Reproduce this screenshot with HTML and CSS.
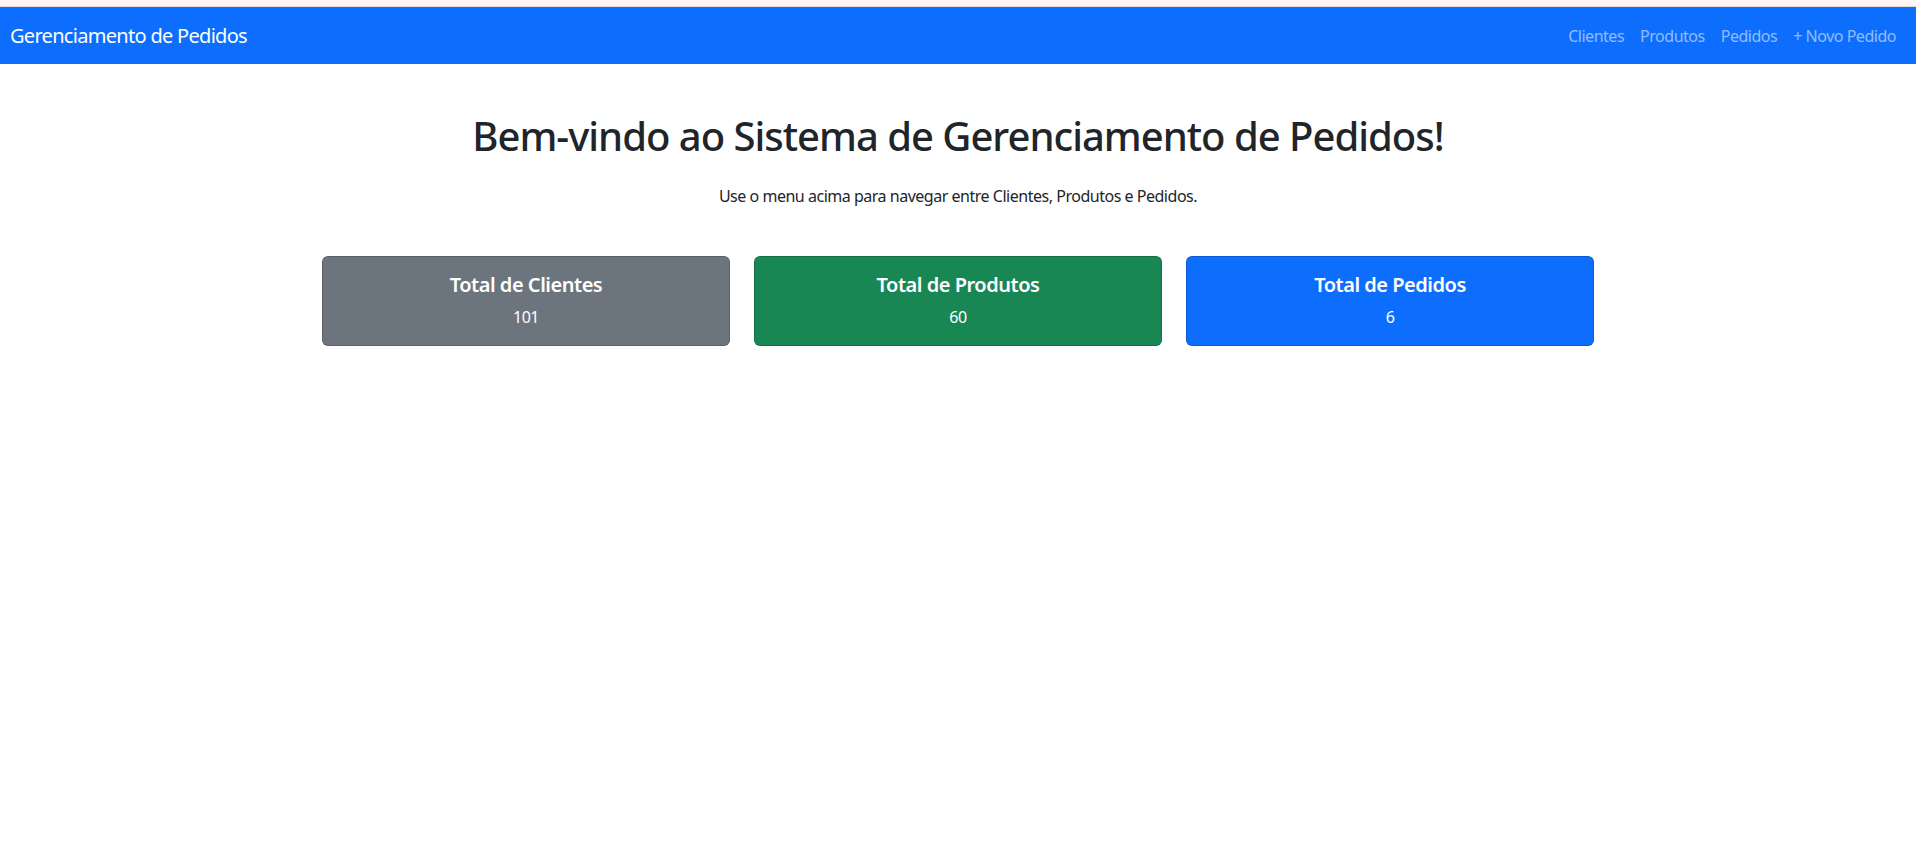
FILE: index.html
```html
<!DOCTYPE html>
<html lang="pt-BR">
<head>
<meta charset="utf-8">
<title>Gerenciamento de Pedidos</title>
<link rel="stylesheet" href="styles.css">
</head>
<body>
<div class="topstrip"></div>
<nav class="navbar">
  <a class="brand" href="#">Gerenciamento de Pedidos</a>
  <ul class="nav">
    <li><a href="#">Clientes</a></li>
    <li><a href="#">Produtos</a></li>
    <li><a href="#">Pedidos</a></li>
    <li><a href="#">+ Novo Pedido</a></li>
  </ul>
</nav>
<main class="container">
  <h1 class="title">Bem-vindo ao Sistema de Gerenciamento de Pedidos!</h1>
  <p class="subtitle">Use o menu acima para navegar entre Clientes, Produtos e Pedidos.</p>
  <div class="cards">
    <div class="card card-secondary">
      <h5 class="card-title">Total de Clientes</h5>
      <p class="card-text">101</p>
    </div>
    <div class="card card-success">
      <h5 class="card-title">Total de Produtos</h5>
      <p class="card-text">60</p>
    </div>
    <div class="card card-primary">
      <h5 class="card-title">Total de Pedidos</h5>
      <p class="card-text">6</p>
    </div>
  </div>
</main>
</body>
</html>
```
FILE: styles.css
```css
* { box-sizing: border-box; }
html, body { margin: 0; padding: 0; }
body {
  font-family: "Noto Sans", "Open Sans", sans-serif;
  font-size: 16px;
  line-height: 1.5;
  letter-spacing: -0.03em;
  color: #212529;
  background: #fff;
}
.topstrip {
  height: 7px;
  background: #fff4f4;
  border-bottom: 1px solid #e6dcdc;
}
.navbar {
  background: #0d6efd;
  height: 57px;
  display: flex;
  align-items: center;
  justify-content: space-between;
  padding: 0 12px 0 10px;
}
.brand {
  color: #fff;
  font-size: 20px;
  line-height: 30px;
  letter-spacing: -0.035em;
  text-decoration: none;
}
.nav {
  list-style: none;
  margin: 0;
  padding: 0;
  display: flex;
}
.nav a {
  display: block;
  padding: 8px 8px;
  color: rgba(255, 255, 255, 0.55);
  text-decoration: none;
  font-size: 16px;
  line-height: 24px;
}
.container {
  width: 1272px;
  margin: 0 auto;
  padding-top: 48px;
  text-align: center;
}
.title {
  margin: 0 0 24px;
  font-size: 40px;
  font-weight: 500;
  line-height: 48px;
  letter-spacing: -0.025em;
}
.subtitle {
  margin: 0 0 48px;
  font-size: 16px;
  line-height: 24px;
}
.cards {
  display: grid;
  grid-template-columns: repeat(3, 1fr);
  gap: 24px;
}
.card {
  border: 1px solid rgba(0, 0, 0, 0.175);
  border-radius: 6px;
  padding: 16px;
  color: #fff;
}
.card-secondary { background: #6c757d; }
.card-success { background: #198754; }
.card-primary { background: #0d6efd; }
.card-title {
  margin: 0 0 8px;
  font-size: 20px;
  font-weight: 600;
  line-height: 24px;
}
.card-text {
  margin: 0;
  line-height: 24px;
}
```
